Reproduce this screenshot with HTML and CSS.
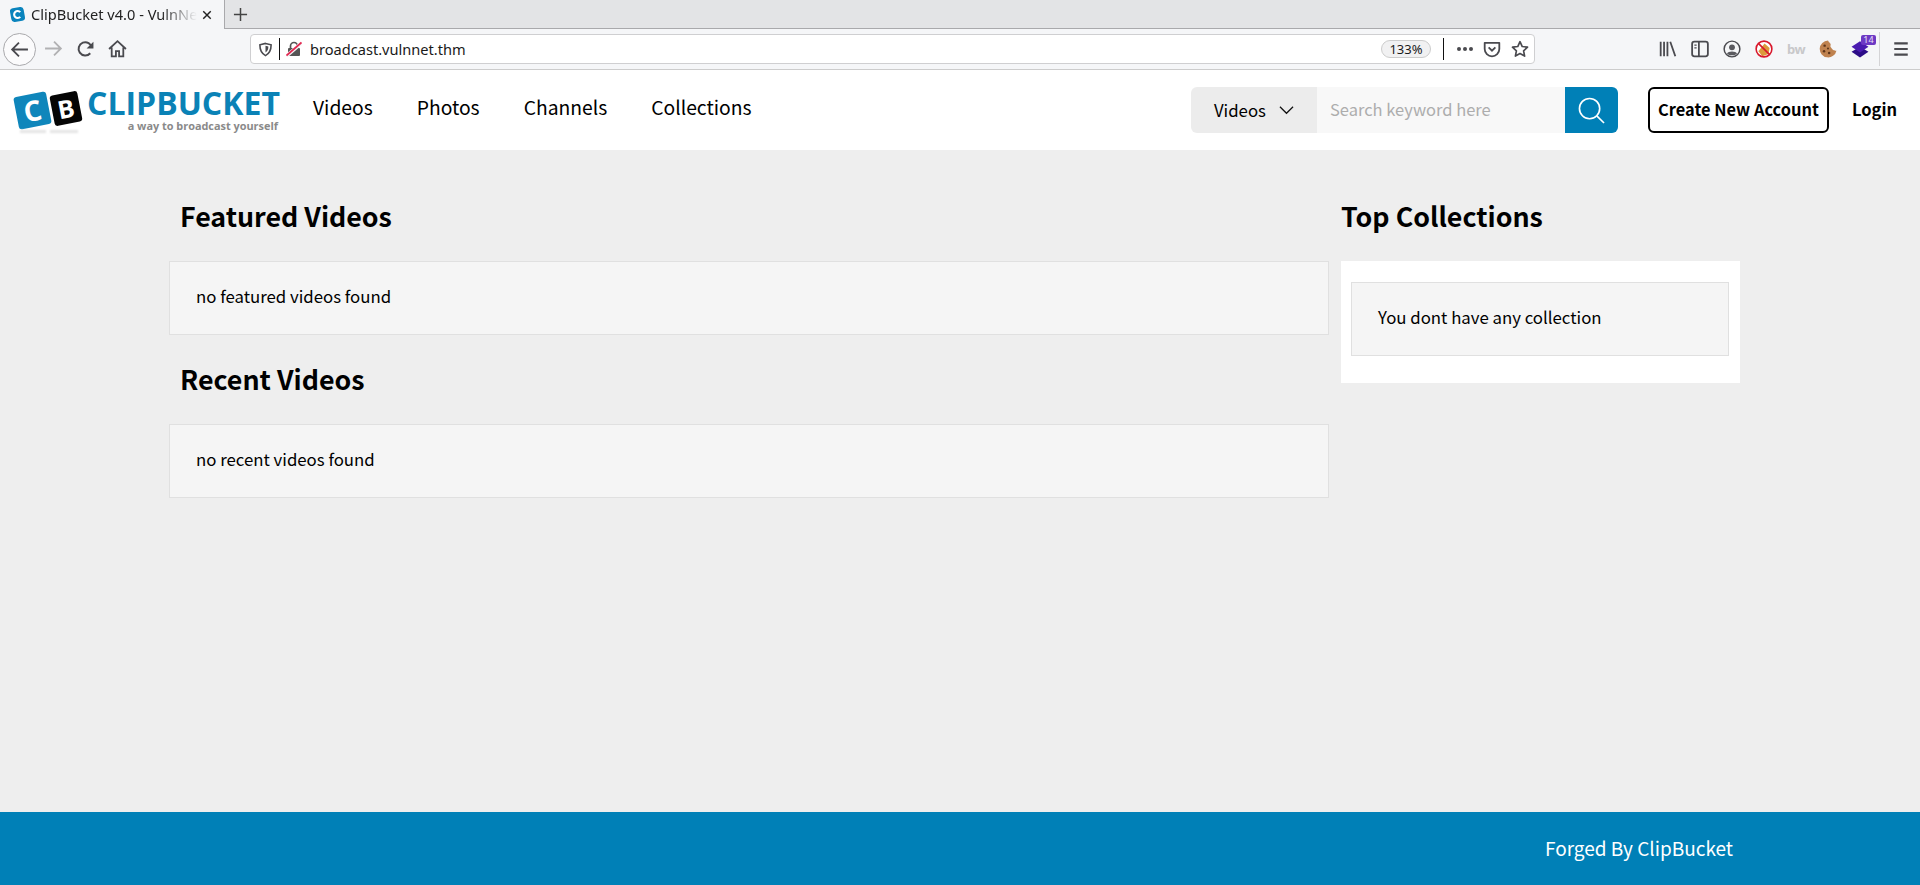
FILE: index.html
```html
<!DOCTYPE html>
<html lang="en">
<head>
<meta charset="utf-8">
<title>ClipBucket v4.0 - VulnNet</title>
<link rel="stylesheet" href="styles.css">
</head>
<body>
<div class="browser">
  <div class="tabbar">
    <div class="tab">
      <svg class="favicon" viewBox="0 0 16 16"><rect x="1.500" y="1.500" width="13" height="13" rx="3" fill="#0a84bd" transform="rotate(-10 8 8)"/><path d="M10.600 5.800A3.300 3.300 0 1 0 10.600 10.200" fill="none" stroke="#fff" stroke-width="2"/></svg>
      <span class="tab-title">ClipBucket v4.0 - VulnNet</span>
      <svg class="tab-close" viewBox="0 0 12 12"><path d="M1.500 1.500l9 9M10.500 1.500l-9 9" stroke="#222" stroke-width="1.700"/></svg>
    </div>
    <div class="newtab"><svg viewBox="0 0 16 16"><path d="M8 1v14M1 8h14" stroke="#444" stroke-width="1.600"/></svg></div>
  </div>
  <div class="toolbar">
    <div class="nav-btns">
      <span class="tbtn back"><svg viewBox="0 0 18 18"><path d="M17 9H2M8.500 2.500L2 9l6.500 6.500" fill="none" stroke="#4a4a4f" stroke-width="1.700"/></svg></span>
      <span class="tbtn"><svg viewBox="0 0 18 18"><path d="M1 9h15M9.500 2.500L16 9l-6.500 6.500" fill="none" stroke="#b1b1b3" stroke-width="1.700"/></svg></span>
      <span class="tbtn"><svg viewBox="0 0 18 18"><path d="M15 8.500A6.300 6.300 0 1 0 13.500 13.500" fill="none" stroke="#4a4a4f" stroke-width="1.900"/><path d="M16.500 2.500v6.500h-6.500z" fill="#4a4a4f"/></svg></span>
      <span class="tbtn"><svg viewBox="0 0 18 18"><path d="M1 9.500L9 2l8 7.500M3.500 8v8.500h4v-5h3v5h4V8" fill="none" stroke="#4a4a4f" stroke-width="1.700"/></svg></span>
    </div>
    <div class="urlbar">
      <svg class="url-shield" viewBox="0 0 16 16"><path d="M8 1.500l6 1.500c0 5-1 9-6 11.500C3 12 2 8 2 3z" fill="none" stroke="#4a4a4f" stroke-width="1.700"/><path d="M8 4l3 .8c0 3-.6 4.700-3 6.400z" fill="#4a4a4f"/></svg>
      <span class="url-sep"></span>
      <svg class="url-lock" viewBox="0 0 16 16"><path d="M4.500 7V5a3.500 3.500 0 0 1 7 0v2" fill="none" stroke="#555" stroke-width="1.700"/><rect x="2" y="7" width="12" height="8" rx="1" fill="#555"/><path d="M0.500 15L15.500 2" stroke="#f6f6f8" stroke-width="3.500"/><path d="M0.500 14.500L15.500 1.500" stroke="#e22850" stroke-width="1.700"/></svg>
      <span class="url-text">broadcast.vulnnet.thm</span>
      <span class="zoom-badge">133%</span>
      <span class="url-sep tall"></span>
      <span class="url-dots"><i></i><i></i><i></i></span>
      <svg class="url-icon" viewBox="0 0 16 16"><path d="M1.500 2.500h13v5.500a6.500 6.500 0 0 1-13 0z" fill="none" stroke="#4a4a4f" stroke-width="1.600" stroke-linejoin="round"/><path d="M5 6.500l3 3 3-3" fill="none" stroke="#4a4a4f" stroke-width="1.600"/></svg>
      <svg class="url-icon" viewBox="0 0 16 16"><path d="M8 1.500l2 4.300 4.700.6-3.500 3.200.9 4.700L8 12l-4.100 2.300.9-4.700L1.300 6.400 6 5.800z" fill="none" stroke="#4a4a4f" stroke-width="1.500" stroke-linejoin="round"/></svg>
    </div>
    <div class="tools">
      <span class="tool"><svg viewBox="0 0 16 16"><path d="M1.500 1.500v13M4.500 1.500v13M7.500 1.500v13M10 1.500l4.500 13" stroke="#4a4a4f" stroke-width="1.600" fill="none"/></svg></span>
      <span class="tool"><svg viewBox="0 0 16 16"><rect x="1" y="1.500" width="14" height="13" rx="2" fill="none" stroke="#4a4a4f" stroke-width="1.600"/><path d="M7 1.500v13" stroke="#4a4a4f" stroke-width="1.600"/><path d="M3 4.500h2M3 7h2" stroke="#4a4a4f" stroke-width="1.200"/></svg></span>
      <span class="tool"><svg viewBox="0 0 16 16"><circle cx="8" cy="8" r="7" fill="none" stroke="#4a4a4f" stroke-width="1.300"/><circle cx="8" cy="6.500" r="2.600" fill="#5a5a5f"/><path d="M3.500 12c1-2.500 8-2.500 9 0-2 2.200-7 2.200-9 0z" fill="#5a5a5f"/></svg></span>
      <span class="tool"><svg viewBox="0 0 16 16"><circle cx="8" cy="8" r="6.500" fill="#fff"/><path d="M3 10l5.500-7 4.500 4-1 5.500-5.500 2z" fill="#dc9a3c"/><circle cx="8" cy="8" r="7" fill="none" stroke="#d8172b" stroke-width="1.400"/><path d="M3 3l10 10" stroke="#d8172b" stroke-width="1.400"/></svg></span>
      <span class="tool bw">bw</span>
      <span class="tool"><svg viewBox="0 0 16 16"><path d="M8 .5A7.500 7.500 0 1 0 15.500 9.500c-1 .5-1.500-.5-2.500-.5S11.500 7.500 10.500 6.500 11 4 10 3 8.500 1.500 8 .5z" fill="#bf824f"/><circle cx="5" cy="5" r="1.100" fill="#5c3419"/><circle cx="4.500" cy="10" r="1.100" fill="#5c3419"/><circle cx="9" cy="11.500" r="1.100" fill="#5c3419"/><circle cx="8" cy="7.500" r=".9" fill="#5c3419"/></svg></span>
      <span class="tool stack">
        <svg viewBox="0 0 16 16"><path d="M8 6l7.500 4.500L8 15.500.5 10.500z" fill="#2c0c88"/><path d="M8 1l7.500 5L8 11 .5 6z" fill="#4a1bb0"/></svg>
        <b class="badge">14</b>
      </span>
      <span class="tools-sep"></span>
      <span class="tool"><svg viewBox="0 0 16 16"><path d="M2 3h12M2 8h12M2 13h12" stroke="#4a4a4f" stroke-width="1.800"/></svg></span>
    </div>
  </div>
</div>

<header class="site-header">
  <a class="logo" href="#">
    <span class="logo-marks">
      <span class="mark mark-c">C</span>
      <span class="mark mark-b">B</span>
      <span class="mark-shadow"></span>
    </span>
    <span class="logo-text">
      <span class="logo-name">CLIPBUCKET</span>
      <span class="logo-tag">a way to broadcast yourself</span>
    </span>
  </a>
  <nav class="main-nav">
    <a href="#">Videos</a>
    <a href="#">Photos</a>
    <a href="#">Channels</a>
    <a href="#">Collections</a>
  </nav>
  <form class="search">
    <span class="search-type">Videos <svg viewBox="0 0 16 10"><path d="M1 1.500L8 8.500l7-7" fill="none" stroke="#111" stroke-width="1.300"/></svg></span>
    <span class="search-input">Search keyword here</span>
    <span class="search-btn"><svg viewBox="0 0 28 28"><circle cx="12" cy="12" r="10.500" fill="none" stroke="#fff" stroke-width="1.700"/><path d="M19.500 19.500l7.500 7.500" stroke="#fff" stroke-width="1.700"/></svg></span>
  </form>
  <a class="btn-create" href="#">Create New Account</a>
  <a class="btn-login" href="#">Login</a>
</header>

<main class="content">
  <section class="col-main">
    <h2 class="heading inset">Featured Videos</h2>
    <div class="notice">no featured videos found</div>
    <h2 class="heading inset">Recent Videos</h2>
    <div class="notice">no recent videos found</div>
  </section>
  <aside class="col-side">
    <h2 class="heading">Top Collections</h2>
    <div class="side-card">
      <div class="notice">You dont have any collection</div>
    </div>
  </aside>
</main>

<footer class="site-footer">Forged By ClipBucket</footer>
</body>
</html>
```

FILE: styles.css
```css
* { box-sizing: border-box; }
html, body { height: 100%; }
body {
  margin: 0;
  height: 885px;
  overflow: hidden;
  display: flex;
  flex-direction: column;
  background: #eeeeee;
  color: #000;
  font-family: "Noto Sans CJK SC", "Noto Sans", sans-serif;
}
a { color: inherit; text-decoration: none; }
svg { display: block; }

/* Browser chrome */
.browser { flex: none; font-family: "Noto Sans", sans-serif; }
.tabbar { height: 29px; display: flex; background: #e3e4e6; }
.tab {
  width: 225px;
  display: flex;
  align-items: center;
  padding: 0 10px 0 9px;
  background: #f5f6f8;
  border-right: 1px solid #a9a9ac;
}
.favicon { width: 17px; height: 17px; flex: none; }
.tab-title {
  flex: 1;
  margin-left: 5px;
  margin-top: -2px;
  font-size: 14.600px;
  white-space: nowrap;
  overflow: hidden;
  color: #222;
  -webkit-mask-image: linear-gradient(90deg, #000 78%, transparent 100%);
  mask-image: linear-gradient(90deg, #000 78%, transparent 100%);
}
.tab-close { width: 10px; height: 10px; flex: none; margin-left: 5px; margin-right: 2px; }
.newtab {
  flex: 1;
  display: flex;
  align-items: center;
  padding-left: 8px;
  border-bottom: 1px solid #a9a9ac;
}
.newtab svg { width: 15px; height: 15px; }
.toolbar {
  height: 41px;
  display: flex;
  align-items: center;
  background: #f5f6f8;
  border-bottom: 1px solid #cccccc;
}
.nav-btns { display: flex; margin-left: 3px; width: 247px; }
.tbtn { width: 32px; height: 32px; display: flex; align-items: center; justify-content: center; }
.tbtn svg { width: 19px; height: 19px; }
.tbtn.back { border: 1px solid #a9a9ac; border-radius: 50%; background: #fbfbfc; width: 33px; height: 33px; margin-right: 1px; }
.urlbar {
  width: 1285px;
  height: 30px;
  display: flex;
  align-items: center;
  padding: 0 5px 0 7px;
  background: #fff;
  border: 1px solid #cfcfd1;
  border-radius: 4px;
}
.url-shield { width: 15px; height: 15px; flex: none; }
.url-sep { width: 1px; height: 22px; background: #111; margin: 0 6px; flex: none; }
.url-lock { width: 16px; height: 16px; flex: none; }
.url-text { flex: 1; margin-left: 8px; font-size: 14.600px; color: #1a1a1a; }
.zoom-badge {
  width: 50px;
  height: 18px;
  line-height: 16px;
  border: 1px solid #ccc;
  border-radius: 9px;
  background: #f1f1f2;
  font-size: 13px;
  text-align: center;
  color: #1a1a1a;
}
.url-sep.tall { margin: 0 13px 0 12px; }
.url-dots { display: flex; gap: 2px; margin-right: 10px; width: 16px; flex: none; }
.url-dots i { width: 4px; height: 4px; background: #4a4a4f; border-radius: 50%; }
.url-icon { width: 18px; height: 18px; flex: none; margin-right: 10px; }
.url-icon:last-child { margin-right: 0; }
.tools { display: flex; align-items: center; margin-left: 117px; }
.tool {
  position: relative;
  width: 32px;
  height: 32px;
  display: flex;
  align-items: center;
  justify-content: center;
}
.tool svg { width: 18px; height: 18px; }
.tool.bw { font-size: 13px; font-weight: 700; color: #c8c8ca; letter-spacing: -.5px; }
.tools-sep { width: 1px; height: 34px; background: #d4d4d6; margin: 0 5px 0 3px; }
.badge {
  position: absolute;
  top: 2px;
  right: 0;
  min-width: 15px;
  height: 10px;
  padding: 0 2px;
  background: #6d39c4;
  border-radius: 2px;
  color: #e8e0f8;
  font-size: 9px;
  font-weight: 400;
  line-height: 10px;
  text-align: center;
}

/* Site header */
.site-header {
  flex: none;
  height: 80px;
  display: flex;
  align-items: center;
  padding: 0 23px 0 14px;
  background: #fff;
}
.logo { display: flex; align-items: center; width: 266px; flex: none; }
.logo-marks { position: relative; display: block; width: 74px; height: 44px; flex: none; }
.mark {
  position: absolute;
  border-radius: 3px;
  color: #fff;
  font-family: "Open Sans", sans-serif;
  font-weight: 700;
  text-align: center;
  transform: rotate(-11deg);
}
.mark-c { left: 2px; top: 6px; width: 33px; height: 33px; background: #0f86bb; font-size: 28px; line-height: 33px; }
.mark-b { left: 38px; top: 5px; width: 28px; height: 31px; background: #050505; font-size: 25px; line-height: 31px; }
.mark-shadow {
  position: absolute;
  left: 6px;
  top: 42px;
  width: 58px;
  height: 3px;
  background: linear-gradient(90deg, #e4e4e4 0 45%, transparent 45% 52%, #e4e4e4 52%);
  filter: blur(1px);
}
.logo-text { display: flex; flex-direction: column; align-items: flex-end; margin-top: -2px; margin-left: -1px; }
.logo-name { font: 700 32px/32px "Open Sans", sans-serif; color: #0a82b6; }
.logo-tag { font: 700 10.900px/13px "Open Sans", sans-serif; color: #8a8a8a; margin-right: 2px; }
.main-nav { display: flex; gap: 44px; margin-left: 33px; padding-bottom: 6px; font-size: 19.300px; line-height: 25px; }
.search { display: flex; height: 46px; margin-left: auto; }
.search-type {
  width: 126px;
  display: flex;
  align-items: center;
  justify-content: center;
  gap: 13px;
  background: #ececec;
  border-radius: 6px 0 0 6px;
  font-size: 16.800px;
}
.search-type svg { width: 15px; height: 10px; }
.search-input {
  width: 248px;
  display: flex;
  align-items: center;
  padding-left: 13px;
  padding-bottom: 2px;
  background: #f8f8f8;
  color: #adadad;
  font-size: 16.500px;
}
.search-btn {
  width: 53px;
  display: flex;
  align-items: center;
  justify-content: center;
  background: #0080b7;
  border-radius: 0 6px 6px 0;
}
.search-btn svg { width: 27px; height: 27px; }
.btn-create {
  width: 181px;
  height: 46px;
  margin-left: 30px;
  border: 2px solid #000;
  border-radius: 6px;
  font-size: 16.400px;
  font-weight: 700;
  line-height: 40px;
  text-align: center;
  white-space: nowrap;
}
.btn-login { margin-left: 23px; margin-top: -2px; font-size: 16.500px; font-weight: 700; line-height: 24px; }

/* Content */
.content {
  flex: 1;
  display: flex;
  gap: 12px;
  padding: 0 0 0 169px;
}
.col-main { width: 1160px; }
.col-side { width: 399px; }
.heading {
  margin: 0;
  height: 111px;
  padding-top: 46px;
  font-size: 26.800px;
  font-weight: 700;
  line-height: 40px;
}
.col-main .notice + .heading { height: 89px; padding-top: 24px; }
.heading.inset { padding-left: 11px; }
.notice {
  height: 74px;
  padding: 0 26px;
  background: #f5f5f5;
  border: 1px solid #e0e0e0;
  font-size: 16.800px;
  line-height: 68px;
}
.side-card { height: 122px; padding: 21px 11px 0 10px; background: #fff; }

/* Footer */
.site-footer {
  flex: none;
  height: 73px;
  padding-right: 187px;
  background: #0080b7;
  color: #fff;
  font-size: 19px;
  line-height: 71px;
  text-align: right;
}
```
